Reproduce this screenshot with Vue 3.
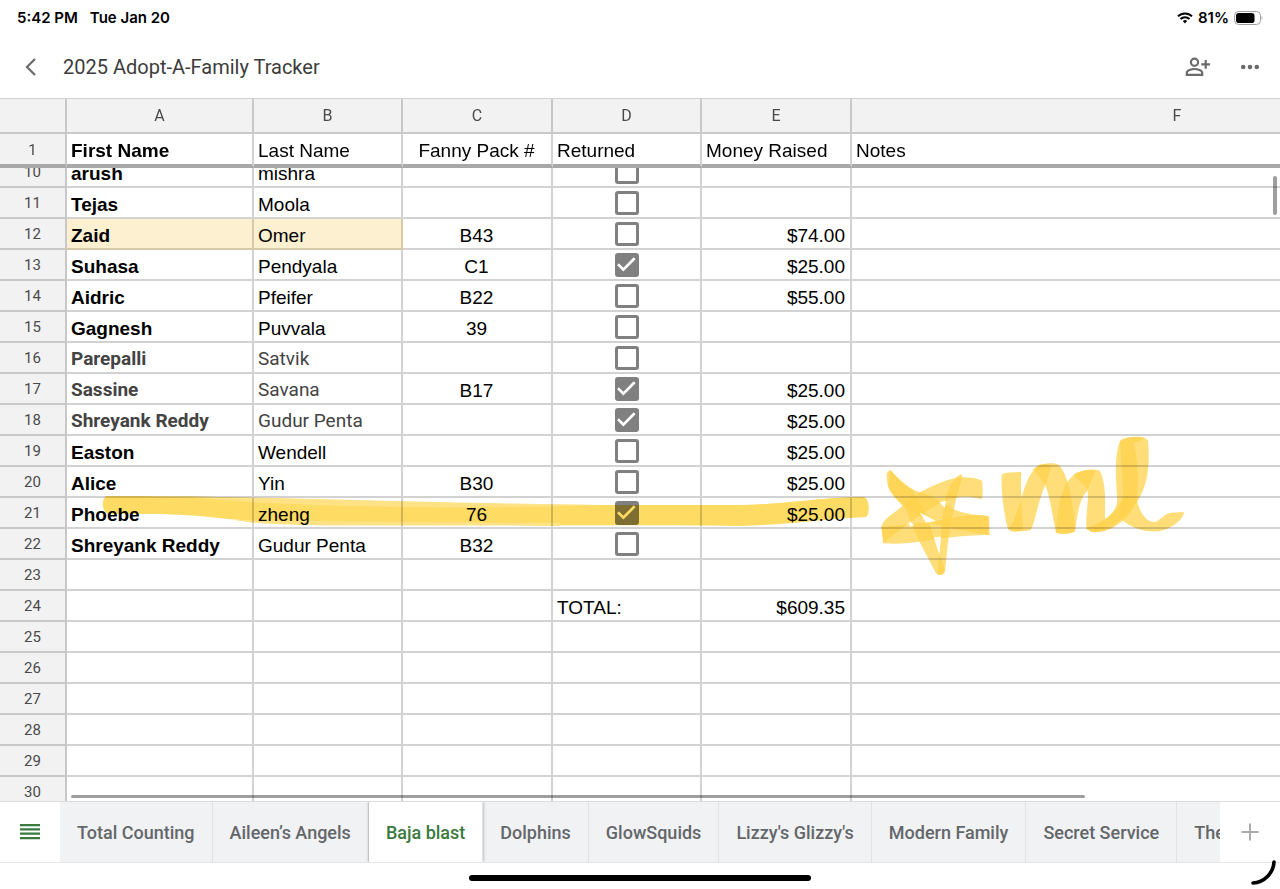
<script setup>
import { onMounted, ref } from 'vue';

const columns = ['A', 'B', 'C', 'D', 'E', 'F'];

const rows = ref([
    { id: 10, first: 'arush', last: 'mishra', returned: false },
    { id: 11, first: 'Tejas', last: 'Moola', returned: false },
    { id: 12, first: 'Zaid', last: 'Omer', pack: 'B43', returned: false, money: '$74.00', marked: true },
    { id: 13, first: 'Suhasa', last: 'Pendyala', pack: 'C1', returned: true, money: '$25.00' },
    { id: 14, first: 'Aidric', last: 'Pfeifer', pack: 'B22', returned: false, money: '$55.00' },
    { id: 15, first: 'Gagnesh', last: 'Puvvala', pack: '39', returned: false },
    { id: 16, first: 'Parepalli', last: 'Satvik', returned: false, pasted: true },
    { id: 17, first: 'Sassine', last: 'Savana', pack: 'B17', returned: true, money: '$25.00', pasted: true },
    { id: 18, first: 'Shreyank Reddy', last: 'Gudur Penta', returned: true, money: '$25.00', pasted: true },
    { id: 19, first: 'Easton', last: 'Wendell', returned: false, money: '$25.00' },
    { id: 20, first: 'Alice', last: 'Yin', pack: 'B30', returned: false, money: '$25.00' },
    { id: 21, first: 'Phoebe', last: 'zheng', pack: '76', returned: true, money: '$25.00' },
    { id: 22, first: 'Shreyank Reddy', last: 'Gudur Penta', pack: 'B32', returned: false },
    { id: 23 },
    { id: 24, label: 'TOTAL:', money: '$609.35' },
    { id: 25 },
    { id: 26 },
    { id: 27 },
    { id: 28 },
    { id: 29 },
    { id: 30 }
]);

const sheets = [
    'Total Counting',
    'Aileen’s Angels',
    'Baja blast',
    'Dolphins',
    'GlowSquids',
    "Lizzy's Glizzy's",
    'Modern Family',
    'Secret Service',
    'The'
];
const activeSheet = ref('Baja blast');

const scroller = ref(null);

// the first visible row sits partly under the frozen one
onMounted(() => {
    scroller.value.scrollTop = 11;
});
</script>

<template>
    <div class="app">
        <div class="status-bar">
            <span>5:42 PM</span>
            <span class="date">Tue Jan 20</span>
            <svg class="wifi" width="16" height="12" viewBox="0 0 16 12">
                <path d="M1 4.4a10 10 0 0 1 14 0" />
                <path d="M3.5 7a6.4 6.4 0 0 1 9 0" />
                <path class="dot" d="M5.8 9.1a3.2 3.2 0 0 1 4.4 0L8 11.5z" />
            </svg>
            <span>81%</span>
            <svg class="battery" width="29" height="14" viewBox="0 0 29 14">
                <rect x="0.5" y="0.5" width="26" height="13" rx="4" fill="none" stroke="#a0a0a0" />
                <rect x="2" y="2" width="18.5" height="10" rx="2.8" fill="#000" />
                <path d="M27.6 5v4c1.2-.6 1.2-3.4 0-4z" fill="#a0a0a0" />
            </svg>
        </div>

        <header class="title-bar">
            <button class="icon-button" aria-label="Back">
                <svg width="20" height="20" viewBox="0 0 20 20">
                    <path d="M15 2 7 10l8 8" fill="none" stroke="#6b6b6b" stroke-width="2.2" />
                </svg>
            </button>
            <h1>2025 Adopt-A-Family Tracker</h1>
            <button class="icon-button" aria-label="Share">
                <svg width="26" height="20" viewBox="0 0 26 20" fill="none" stroke="#6b6b6b" stroke-width="2.2">
                    <circle cx="9.5" cy="5.3" r="3.6" />
                    <path d="M1.8 17.9v-2.2c0-2.4 4.6-3.7 7.7-3.7s7.7 1.3 7.7 3.7v2.2z" />
                    <path d="M20.7 3v8.8M16.3 7.4h8.8" />
                </svg>
            </button>
            <button class="icon-button more" aria-label="More">
                <svg width="20" height="20" viewBox="0 0 20 20" fill="#6b6b6b">
                    <circle cx="3.2" cy="10" r="2.3" />
                    <circle cx="10" cy="10" r="2.3" />
                    <circle cx="16.8" cy="10" r="2.3" />
                </svg>
            </button>
        </header>

        <main class="grid">
            <div ref="scroller" class="scroller">
                <table>
                    <colgroup>
                        <col class="col-index" />
                        <col class="col-a" />
                        <col class="col-b" />
                        <col class="col-c" />
                        <col class="col-d" />
                        <col class="col-e" />
                        <col class="col-f" />
                    </colgroup>
                    <thead>
                        <tr class="letters">
                            <th></th>
                            <th v-for="column in columns" :key="column" scope="col">{{ column }}</th>
                        </tr>
                        <tr class="frozen">
                            <th class="index" scope="row">1</th>
                            <td class="first">First Name</td>
                            <td>Last Name</td>
                            <td class="center">Fanny Pack #</td>
                            <td>Returned</td>
                            <td>Money Raised</td>
                            <td>Notes</td>
                        </tr>
                    </thead>
                    <tbody>
                        <tr v-for="row in rows" :key="row.id" :class="{ marked: row.marked, pasted: row.pasted }">
                            <th class="index" scope="row">{{ row.id }}</th>
                            <td class="name first">{{ row.first }}</td>
                            <td class="name">{{ row.last }}</td>
                            <td class="center">{{ row.pack }}</td>
                            <td v-if="row.returned !== undefined" class="check">
                                <input v-model="row.returned" type="checkbox" :aria-label="`Returned, row ${row.id}`" />
                            </td>
                            <td v-else>{{ row.label }}</td>
                            <td class="money">{{ row.money }}</td>
                            <td></td>
                        </tr>
                    </tbody>
                </table>
            </div>

            <svg class="ink" width="1100" height="160" viewBox="100 430 1100 160" aria-hidden="true">
                <defs>
                    <mask id="star-gaps" maskUnits="userSpaceOnUse" x="0" y="0" width="1020" height="510">
                        <rect width="1020" height="510" fill="#fff" />
                        <path d="M180 278l48 25-30 5zM152 307l11 9-15 4zM222 352l20-2-4 53zM238 246l20-2-4 20z" />
                    </mask>
                </defs>
                <path class="line" d="M106 496C180 496 230 497 300 499C420 502 520 505 610 505H740C790 504 820 497 864 497C870 499 870 515 866 517C830 518 790 525 740 526C600 525 400 525 320 525C250 524 210 514 150 514H108C102 511 101 500 106 496z" />
                <path class="line soft" d="M170 496C300 498 440 503 600 505C500 509 350 508 250 502z" />
                <path class="line soft" d="M235 520C300 521 420 522 560 523L560 526C400 525 330 526 300 525C270 524 250 523 235 520z" />
                <g class="strokes" transform="translate(860 420) scale(0.3333)">
                    <g mask="url(#star-gaps)">
                        <path d="M90 149C110 170 130 195 155 208C175 235 190 265 205 300L238 402L254 445C255 468 232 470 226 456L180 368L135 265C95 222 80 215 80 160z" />
                        <path d="M238 402L250 270C256 220 275 175 304 162L308 172C288 230 278 280 266 350L255 455C250 466 240 466 232 462z" />
                        <path d="M366 182C325 165 280 172 245 187C205 202 195 210 178 218C150 240 130 255 110 272C80 292 68 305 64 320L70 370C120 330 170 285 250 245C290 225 330 228 365 237C370 225 368 195 366 182z" />
                        <path d="M64 320L70 370C140 376 200 360 250 354C300 349 350 345 388 345L388 290C350 282 320 285 270 295C200 310 130 315 64 320z" />
                        <path d="M90 149C120 180 150 208 180 217C220 222 270 270 305 276C330 284 360 285 384 288L388 345C340 335 270 330 215 310C170 280 110 250 85 200z" />
                    </g>
                    <path d="M425 165C430 155 465 158 484 155C482 200 484 260 490 330C470 338 450 338 443 325C430 270 423 210 425 165z" />
                    <path d="M445 326C480 290 485 180 530 140C545 128 565 132 575 138L556 195C535 240 525 310 512 330C490 336 465 336 445 326z" />
                    <path d="M520 148C535 130 580 125 598 135C625 170 640 240 645 332C635 342 605 343 588 338C578 290 570 230 556 195z" />
                    <path d="M588 338C592 270 600 190 650 158C670 150 700 148 705 155L682 212C655 240 652 290 645 335C630 342 605 343 588 338z" />
                    <path d="M640 165C665 148 700 145 720 152C738 190 736 240 735 285L735 332C710 338 690 336 679 326C677 280 688 240 682 205z" />
                    <path d="M679 326C710 310 770 290 772 240C768 180 762 110 780 62C795 48 840 48 858 54L822 70C835 130 835 180 830 245C800 310 740 342 695 336z" />
                    <path d="M780 65C800 48 850 48 864 60C870 130 865 190 835 240C770 325 740 335 690 335C740 300 775 270 790 230z" />
                    <path d="M790 225L831 240C840 280 860 308 885 306C905 300 910 280 935 278L972 276C970 300 930 330 895 334C850 336 810 325 775 290z" />
                </g>
            </svg>

            <div class="thumb vertical"></div>
            <div class="thumb horizontal"></div>
        </main>

        <nav class="sheet-bar">
            <button class="all-sheets" aria-label="All sheets">
                <svg width="20" height="16" viewBox="0 0 20 16" fill="#3a7a3e">
                    <path d="M0 0h20v2.2H0zM0 4.3h20v2.2H0zM0 8.6h20v2.2H0zM0 13h20v2.2H0z" />
                </svg>
            </button>
            <div class="tabs">
                <button
                    v-for="sheet in sheets"
                    :key="sheet"
                    class="tab"
                    :class="{ active: sheet === activeSheet }"
                    @click="activeSheet = sheet"
                >
                    {{ sheet }}
                </button>
            </div>
            <button class="add-sheet" aria-label="Add sheet">
                <svg width="18" height="18" viewBox="0 0 18 18">
                    <path d="M9 0.5v17M0.5 9h17" stroke="#ababab" stroke-width="2" />
                </svg>
            </button>
        </nav>

        <footer class="home-area">
            <div class="home-indicator"></div>
            <svg class="corner" width="28" height="28" viewBox="0 0 28 28">
                <path d="M4 24C15 23.500 24.500 14 25 3" fill="none" stroke="#000" stroke-width="3.600" stroke-linecap="round" />
            </svg>
        </footer>
    </div>
</template>

<style>
body {
    margin: 0;
    background: #fff;
}
</style>

<style scoped>
.app {
    position: relative;
    display: flex;
    flex-direction: column;
    height: 100vh;
    overflow: hidden;
    background: #fff;
    font-family: Roboto, sans-serif;
}

button {
    display: flex;
    align-items: center;
    justify-content: center;
    padding: 0;
    border: 0;
    background: none;
    font: inherit;
    cursor: pointer;
}

.status-bar {
    display: flex;
    align-items: center;
    height: 35px;
    padding: 0 17px;
    font-family: Inter, sans-serif;
    font-size: 15px;
    font-weight: 600;
}

.date {
    margin-left: 12px;
}

.wifi {
    margin-left: auto;
    margin-right: 5px;
    fill: none;
    stroke: #000;
    stroke-width: 2;
}

.wifi .dot {
    fill: #000;
    stroke: none;
}

.battery {
    margin-left: 5px;
}

.title-bar {
    display: flex;
    align-items: center;
    height: 63px;
    padding: 0 20px;
}

.title-bar h1 {
    flex: 1;
    margin: 0 0 0 23px;
    color: #3c3c3c;
    font-size: 20px;
    font-weight: 400;
}

.more {
    margin-left: 29px;
}

.grid {
    position: relative;
    flex: 1;
    min-height: 0;
    border-top: 1px solid #d0d0d0;
}

.scroller {
    height: 100%;
    overflow: auto;
    scrollbar-width: none;
}

table {
    width: 1504px;
    table-layout: fixed;
    border-collapse: separate;
    border-spacing: 0;
}

.col-index {
    width: 67px;
}

.col-a {
    width: 187px;
}

.col-b,
.col-d {
    width: 149px;
}

.col-c,
.col-e {
    width: 150px;
}

thead {
    position: sticky;
    top: 0;
    z-index: 1;
}

th,
td {
    box-sizing: border-box;
    height: 31px;
    border-right: 2px solid #d2d2d2;
    border-bottom: 2px solid #d2d2d2;
    background: #fff;
}

th {
    padding: 0;
    border-color: #c8c8c8;
    background: #f2f2f2;
    color: #4a4a4a;
    font-size: 16px;
    font-weight: 400;
    line-height: 20px;
}

.index {
    padding-top: 1px;
    font-size: 15px;
}

td {
    padding: 4px 5px 0 4px;
    overflow: hidden;
    color: #000;
    font-family: "Liberation Sans", Arial, sans-serif;
    font-size: 19px;
    line-height: 25px;
    white-space: nowrap;
}

.letters th {
    height: 35px;
}

.frozen th,
.frozen td {
    height: 34px;
    padding-top: 2px;
    border-bottom: 4px solid #a8a8a8;
}

.first {
    font-weight: 700;
}

.center {
    text-align: center;
}

.money {
    text-align: right;
}

.marked .name {
    border-color: #d6c9a8;
    background: #fdf0d0;
}

.pasted .name {
    padding-top: 2px;
    color: #434343;
    font-family: Roboto, sans-serif;
}

td.check {
    padding: 0;
}

.check input {
    position: relative;
    display: block;
    box-sizing: border-box;
    width: 24px;
    height: 24px;
    margin: 0 auto;
    border: 3px solid #808080;
    border-radius: 3px;
    background: #fff;
    appearance: none;
}

.check input:checked {
    background: #808080;
}

.check input:checked::after {
    content: "";
    position: absolute;
    inset: -3px;
    background: #fff;
    clip-path: polygon(11% 53%, 18% 45%, 37% 64%, 80% 20%, 88% 28%, 37% 79%);
}

.ink {
    position: absolute;
    top: 331px;
    left: 100px;
    z-index: 2;
    mix-blend-mode: multiply;
    pointer-events: none;
}

.line {
    fill: #fedb62;
}

.line.soft {
    fill: #fee285;
}

.strokes path {
    fill: #ffd34c;
    fill-opacity: 0.74;
}

.thumb {
    position: absolute;
    z-index: 3;
    border-radius: 2px;
    background: rgba(0, 0, 0, 0.38);
}

.vertical {
    top: 77px;
    right: 3px;
    width: 4px;
    height: 39px;
}

.horizontal {
    right: 195px;
    bottom: 3px;
    left: 71px;
    height: 3px;
}

.sheet-bar {
    display: flex;
    height: 60px;
    border-top: 1px solid #dcdcdc;
    border-bottom: 1px solid #e4e4e4;
    background: #f1f2f4;
}

.all-sheets,
.add-sheet {
    flex: none;
    width: 60px;
    background: #fff;
}

.tabs {
    display: flex;
    flex: 1;
    min-width: 0;
    overflow: hidden;
}

.tab {
    flex: none;
    padding: 0 17px;
    border-right: 1px solid #e0e2e4;
    color: #64676a;
    font-size: 18px;
    font-weight: 500;
}

.tab.active {
    z-index: 1;
    background: #fff;
    box-shadow: 0 0 3px rgba(0, 0, 0, 0.35);
    color: #3a7a3e;
}

.home-area {
    position: relative;
    display: flex;
    align-items: center;
    justify-content: center;
    height: 26px;
    padding-top: 3px;
    box-sizing: border-box;
}

.home-indicator {
    width: 342px;
    height: 6px;
    border-radius: 3px;
    background: #000;
}

.corner {
    position: absolute;
    right: 3px;
    bottom: 2px;
}
</style>
